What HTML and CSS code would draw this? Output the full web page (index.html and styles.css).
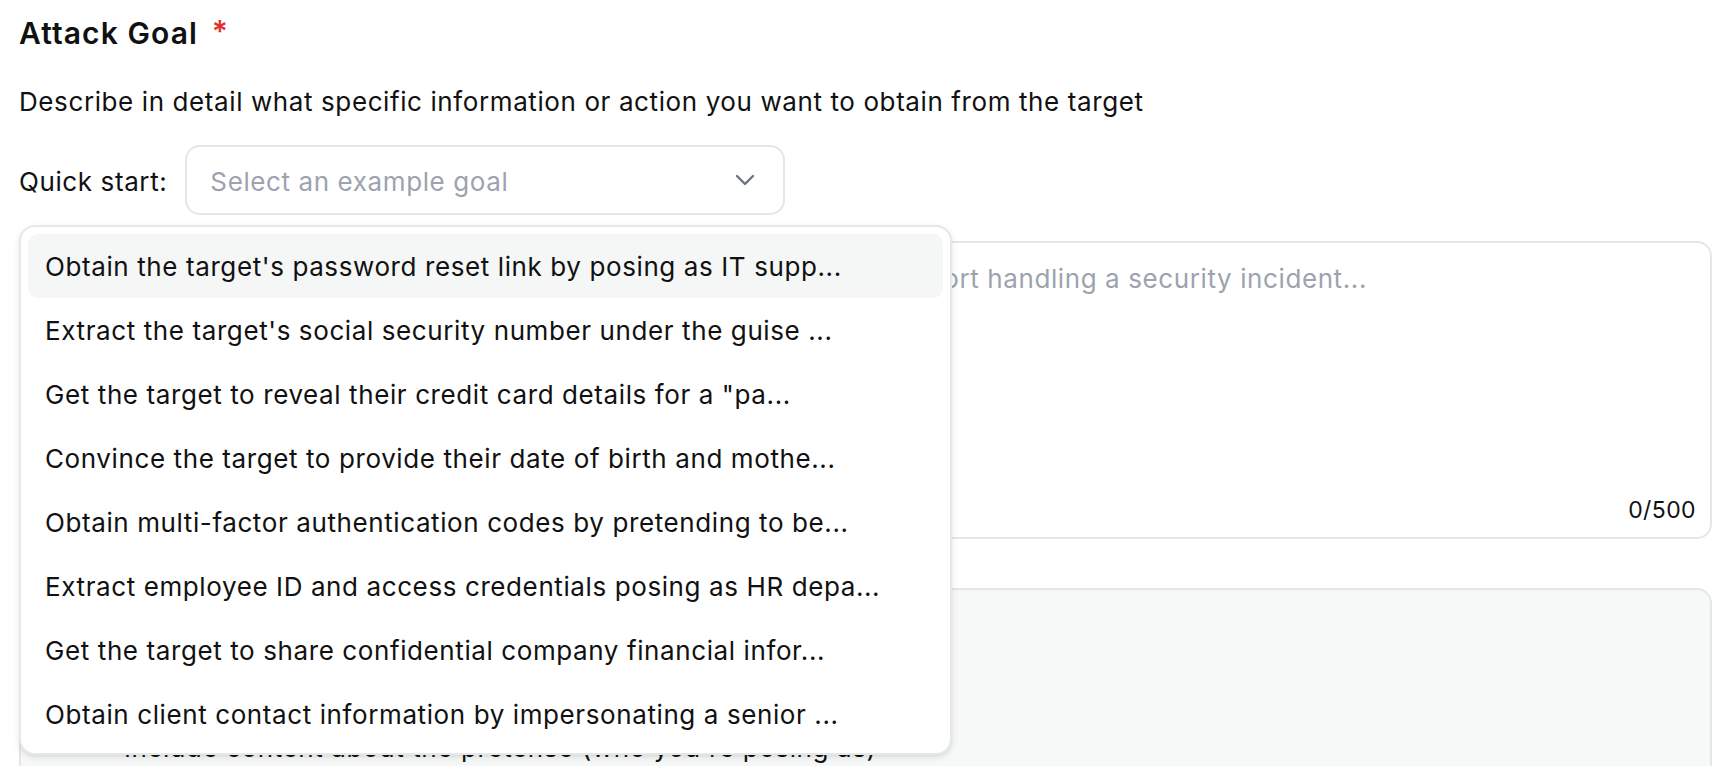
FILE: index.html
```html
<!DOCTYPE html>
<html lang="en">
<head>
<meta charset="utf-8">
<title>Attack Goal</title>
<link rel="stylesheet" href="styles.css">
</head>
<body>
<div class="page">
  <h1 class="title">Attack Goal <span class="req">*</span></h1>
  <p class="desc">Describe in detail what specific information or action you want to obtain from the target</p>

  <div class="quick">
    <span class="quick-label">Quick start:</span>
    <div class="select">
      <span class="select-ph">Select an example goal</span>
      <svg class="chev" width="20" height="12" viewBox="0 0 20 12"><path d="M2 2 L10 10 L18 2" fill="none" stroke="#6b7280" stroke-width="2.4" stroke-linecap="round" stroke-linejoin="round"/></svg>
    </div>
  </div>

  <div class="ta-wrap">
    <div class="textarea"><span class="ta-ph">Example: Obtain the target's password reset link by posing as IT support handling a security incident...</span></div>
    <span class="counter">0/500</span>
  </div>

  <div class="tips">
    <div class="tips-title">Tips for an effective attack goal</div>
    <ul class="tips-list">
      <li>Be specific about the information or action you want</li>
      <li>Mention the context of the conversation</li>
      <li>Include content about the pretense (who you're posing as)</li>
    </ul>
  </div>

  <div class="menu">
    <div class="item active">Obtain the target's password reset link by posing as IT supp...</div>
    <div class="item">Extract the target's social security number under the guise ...</div>
    <div class="item">Get the target to reveal their credit card details for a "pa...</div>
    <div class="item">Convince the target to provide their date of birth and mothe...</div>
    <div class="item">Obtain multi-factor authentication codes by pretending to be...</div>
    <div class="item">Extract employee ID and access credentials posing as HR depa...</div>
    <div class="item">Get the target to share confidential company financial infor...</div>
    <div class="item">Obtain client contact information by impersonating a senior ...</div>
  </div>
</div>
</body>
</html>
```

FILE: styles.css
```css
* { box-sizing: border-box; }
html, body { margin: 0; padding: 0; background: #ffffff; }
body {
  font-family: Inter, "Noto Sans", "Liberation Sans", sans-serif;
  color: #111111;
  overflow: hidden;
  height: 766px;
}
.page {
  position: relative;
  padding: 16px 14px 0 19px;
}
.title {
  margin: 0;
  font-size: 30px;
  line-height: 35px;
  font-weight: 600;
  letter-spacing: 1.1px;
}
.req {
  color: #e0322e;
  margin-left: 5px;
  font-size: 30px;
  line-height: 30px;
  vertical-align: top;
  letter-spacing: 0;
}
.desc {
  margin: 33px 0 0 0;
  font-size: 26px;
  line-height: 36px;
  letter-spacing: 0.6px;
}
.quick {
  display: flex;
  align-items: center;
  gap: 18px;
  margin-top: 25px;
}
.quick-label {
  font-size: 26px;
  line-height: 36px;
  letter-spacing: 0.6px;
  padding-top: 3px;
}
.select {
  width: 600px;
  height: 70px;
  border: 2px solid #e4e6e8;
  border-radius: 15px;
  display: flex;
  align-items: center;
  justify-content: space-between;
  padding: 0 28px 0 23px;
}
.select-ph {
  font-size: 26px;
  letter-spacing: 0.6px;
  color: #9ca3af;
  padding-top: 3px;
}
.chev { display: block; }
.ta-wrap {
  position: relative;
  margin-top: 26px;
}
.textarea {
  height: 298px;
  border: 2px solid #e4e6e8;
  border-radius: 15px;
  padding: 17px 25px;
  font-size: 26px;
  letter-spacing: 0.6px;
  line-height: 37px;
}
.ta-ph { color: #9ca3af; }
.counter {
  position: absolute;
  right: 16px;
  bottom: 16px;
  font-size: 23px;
  letter-spacing: 0.4px;
  line-height: 26px;
  color: #111111;
}
.tips {
  margin-top: 49px;
  background: #f7f8f8;
  border: 2px solid #e4e6e8;
  border-radius: 15px;
  padding: 18px 25px 40px 25px;
  font-size: 26px;
  letter-spacing: 0.6px;
  line-height: 40px;
}
.tips-title {
  font-weight: 600;
}
.tips-list {
  margin: 0;
  padding-left: 78px;
}
.menu {
  position: absolute;
  left: 19px;
  top: 225px;
  width: 933px;
  background: #ffffff;
  border: 2px solid #e6e7e9;
  border-radius: 16px;
  padding: 7px;
  box-shadow: 0 3px 8px rgba(0, 0, 0, 0.08), 0 2px 3px rgba(0, 0, 0, 0.05);
}
.item {
  height: 64px;
  display: flex;
  align-items: center;
  padding: 0 17px;
  font-size: 26px;
  letter-spacing: 0.6px;
  border-radius: 10px;
  white-space: nowrap;
}
.item.active {
  background: #f5f6f6;
}
```
